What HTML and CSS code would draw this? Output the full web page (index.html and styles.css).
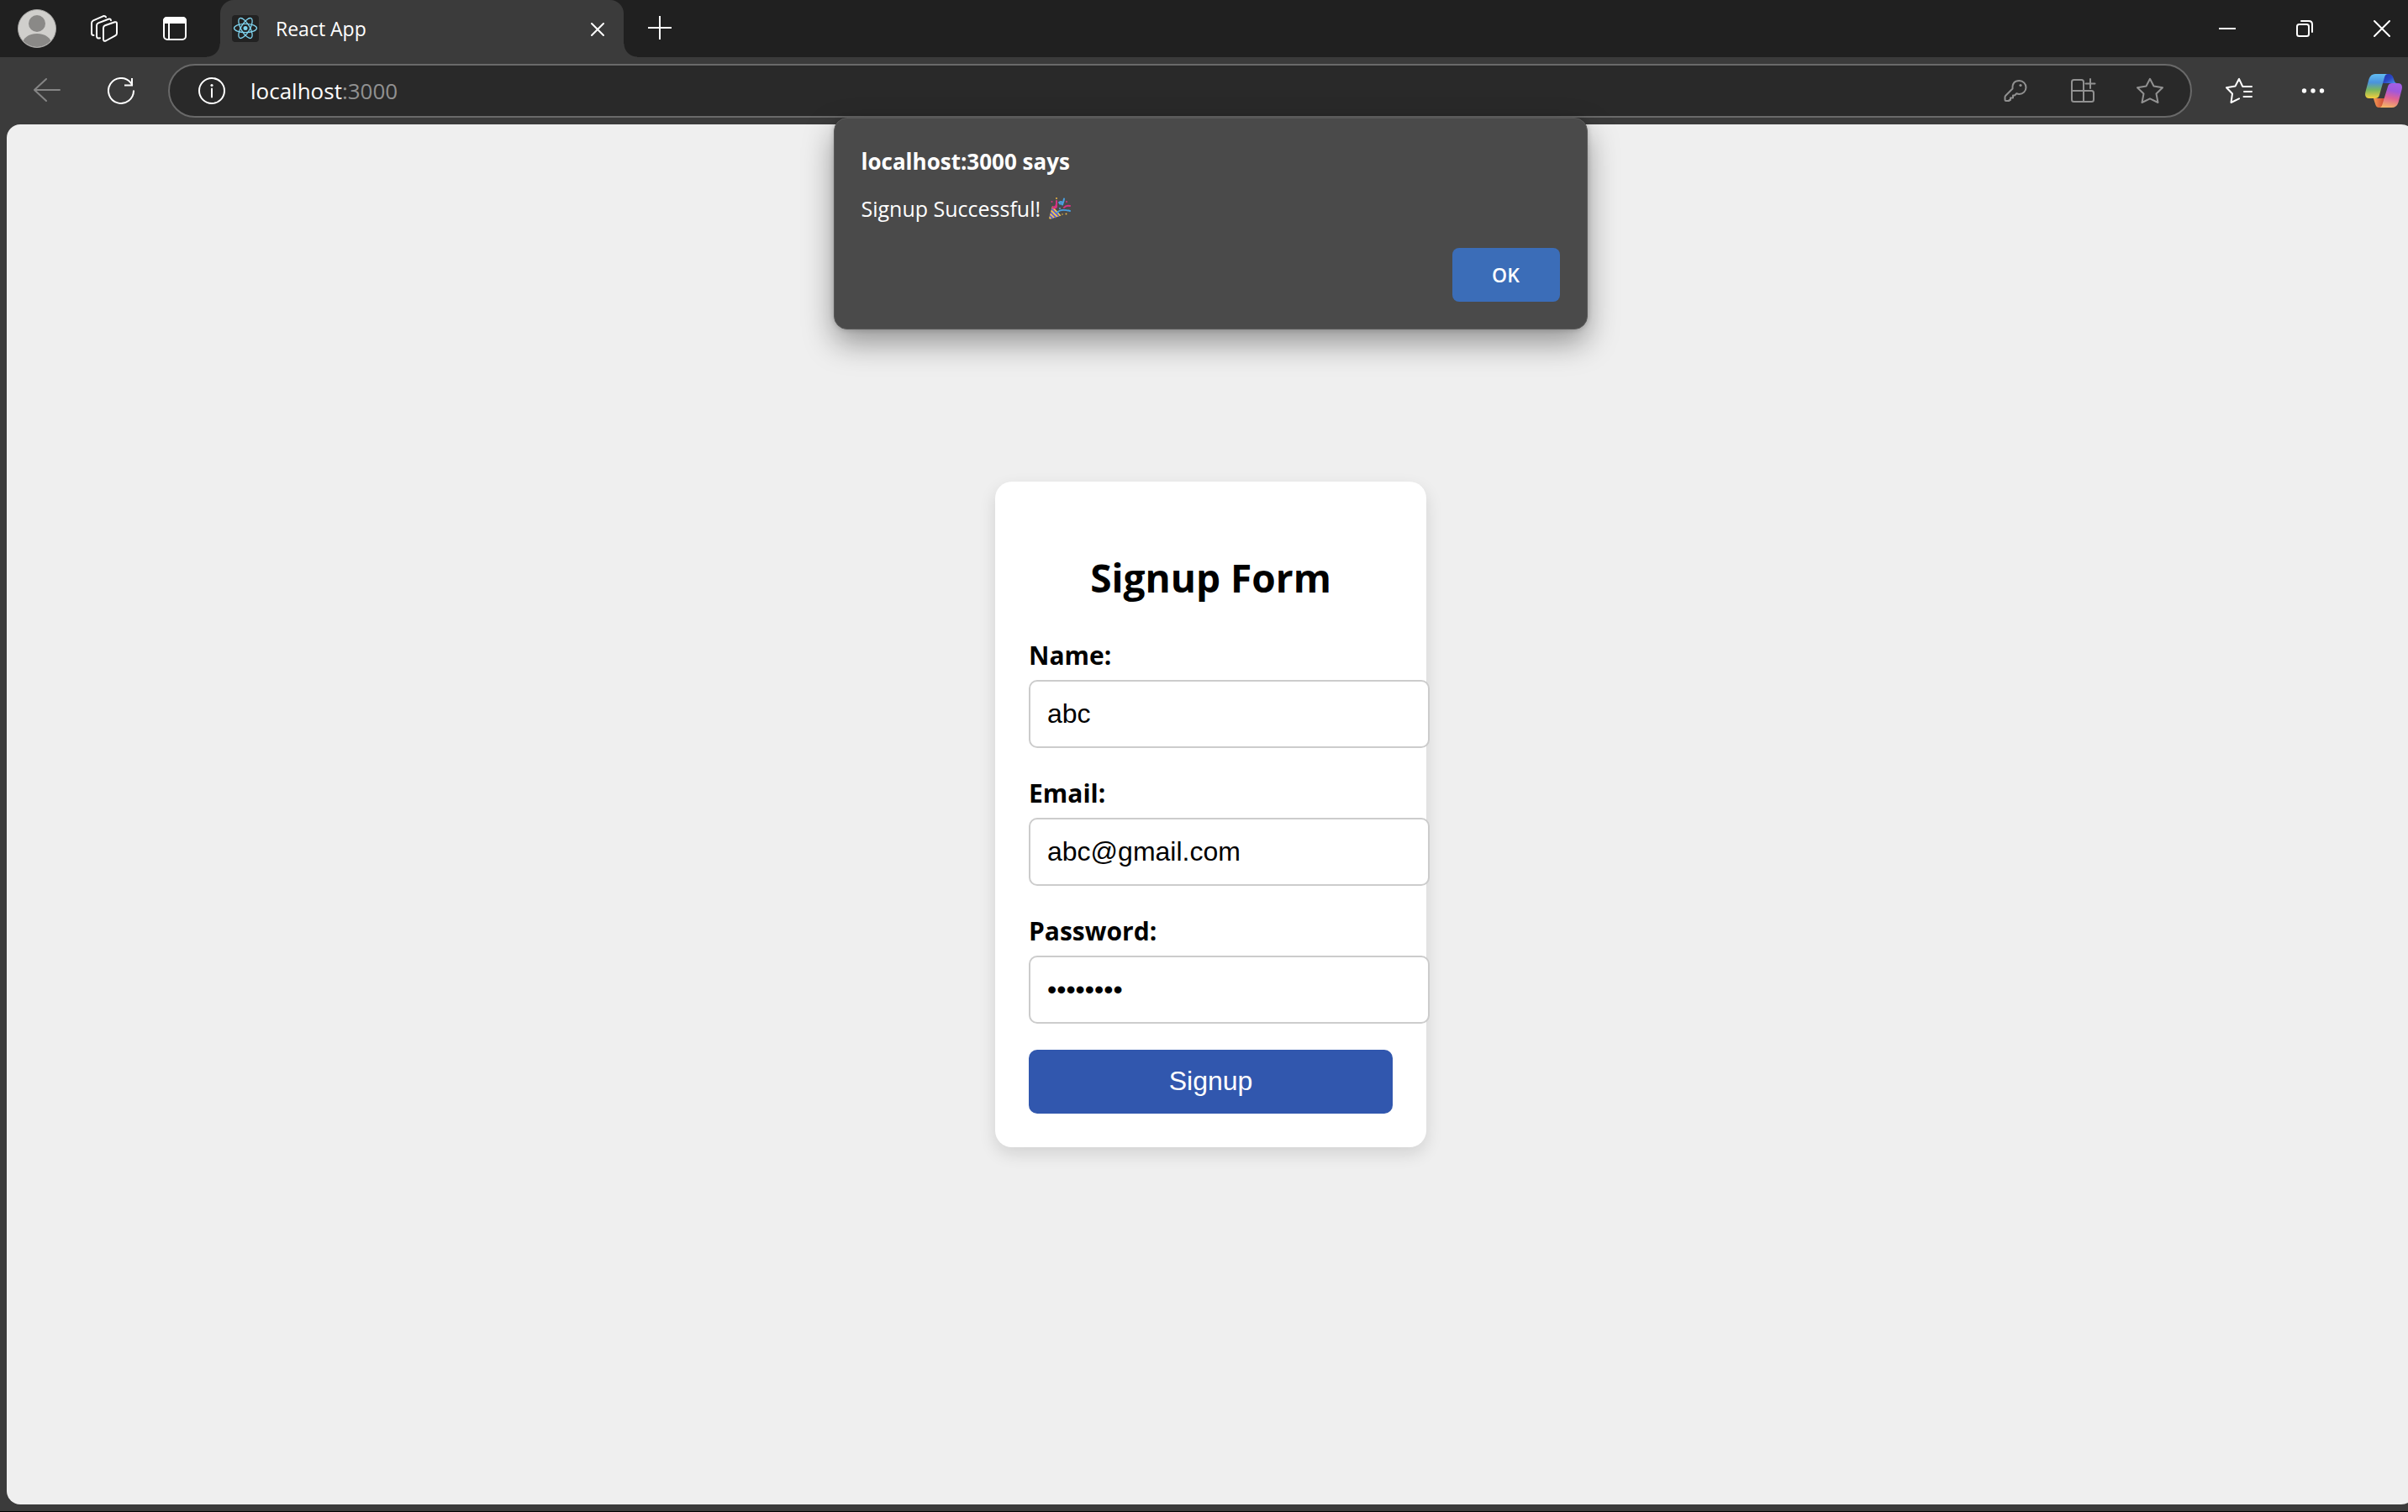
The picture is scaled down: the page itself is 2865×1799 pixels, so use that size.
FILE: index.html
```html
<!DOCTYPE html>
<html lang="en">
<head>
<meta charset="utf-8">
<title>React App</title>
<link rel="stylesheet" href="styles.css">
</head>
<body class="browser">
<header class="tab-strip">
  <button class="icon-button" type="button" aria-label="Profile">
    <svg width="48" height="48" viewBox="0 0 48 48"><defs><clipPath id="avatar-clip"><circle cx="24" cy="24" r="22"/></clipPath></defs><circle cx="24" cy="24" r="22.5" fill="#d0cfcc"/><g clip-path="url(#avatar-clip)" fill="#8a8987"><circle cx="24" cy="18" r="10"/><path d="M6 44c1-9 8-14 18-14s17 5 18 14v4H6z"/></g><circle cx="24" cy="24" r="22.5" fill="none" stroke="#a9a8a6"/></svg>
  </button>
  <button class="icon-button workspaces" type="button" aria-label="Workspaces">
    <svg width="32" height="32" viewBox="0 0 32 32" fill="none" stroke="#fff" stroke-width="2" stroke-linecap="round" stroke-linejoin="round"><path d="M17 12.300 28.500 8.300Q31 7.600 31 10V21.500Q31 23.500 29.200 24.300L18 30.500Q15 31.800 15 28.500V15.200Q15 13 17 12.300z"/><path d="M11 27.200Q7 28.500 7 24.500V12.500Q7 10.200 9 9.400L21 4.700Q23.500 4 24 6.200"/><path d="M3.500 24Q1 24 1 21.500V9.500Q1 7.300 3 6.300L14.500 1.300Q17 .500 18 2.300"/></svg>
  </button>
  <button class="icon-button tab-actions" type="button" aria-label="Tab actions">
    <svg width="32" height="32" viewBox="0 0 32 32"><rect x="3" y="3" width="26" height="26" rx="4" fill="none" stroke="#fff" stroke-width="2"/><path d="M2 10V7q0-5 5-5h18q5 0 5 5v3z" fill="#fff"/><path d="M9 10v19" stroke="#fff" stroke-width="2"/></svg>
  </button>
  <div class="tab">
    <svg class="favicon" width="32" height="32" viewBox="0 0 32 32"><g fill="none" stroke="#7fd3ee" stroke-width="1.300"><ellipse cx="16" cy="15.500" rx="13.500" ry="5.200"/><ellipse cx="16" cy="15.500" rx="13.500" ry="5.200" transform="rotate(60 16 15.500)"/><ellipse cx="16" cy="15.500" rx="13.500" ry="5.200" transform="rotate(120 16 15.500)"/></g><circle cx="16" cy="15.500" r="2.500" fill="#7fd3ee"/></svg>
    <span class="tab-title">React App</span>
    <button class="icon-button" type="button" aria-label="Close tab">
      <svg width="24" height="24" viewBox="0 0 24 24" stroke="#fff" stroke-width="2" stroke-linecap="round"><path d="M5 6l14 14M19 6 5 20"/></svg>
    </button>
  </div>
  <button class="icon-button new-tab" type="button" aria-label="New tab">
    <svg width="32" height="32" viewBox="0 0 32 32" stroke="#fff" stroke-width="2"><path d="M2 15h28M16 1v28"/></svg>
  </button>
  <div class="window-controls">
    <button class="icon-button" type="button" aria-label="Minimize">
      <svg width="32" height="32" viewBox="0 0 32 32"><path d="M6 16h20" stroke="#fff" stroke-width="2"/></svg>
    </button>
    <button class="icon-button" type="button" aria-label="Restore">
      <svg width="32" height="32" viewBox="0 0 32 32" fill="none" stroke="#fff" stroke-width="2" stroke-linecap="round"><rect x="7" y="11" width="14" height="14" rx="2.500"/><path d="M12 7h9q4 0 4 4v9"/></svg>
    </button>
    <button class="icon-button" type="button" aria-label="Close window">
      <svg width="32" height="32" viewBox="0 0 32 32" stroke="#fff" stroke-width="2" stroke-linecap="round"><path d="M7 7l18 18M25 7 7 25"/></svg>
    </button>
  </div>
</header>
<nav class="toolbar" aria-label="Browser toolbar">
  <button class="icon-button back" type="button" aria-label="Back">
    <svg width="32" height="32" viewBox="0 0 32 32" fill="none" stroke="#858585" stroke-width="2" stroke-linecap="round"><path d="M31 15H1M15 2 1 15l14 13"/></svg>
  </button>
  <button class="icon-button" type="button" aria-label="Refresh">
    <svg width="32" height="32" viewBox="0 0 32 32" fill="none" stroke="#fff" stroke-width="2"><path d="M31 15.500A15 15 0 1 1 27.500 6.300L29.500 9M29 1v8.500H20"/></svg>
  </button>
  <div class="address-bar">
    <button class="icon-button" type="button" aria-label="Site information">
      <svg width="32" height="32" viewBox="0 0 32 32" fill="none" stroke="#fff" stroke-width="2"><circle cx="16" cy="16" r="15"/><path d="M16 13.500v10" stroke-linecap="round"/><circle cx="16" cy="9.500" r="1.600" fill="#fff" stroke="none"/></svg>
    </button>
    <span class="url">localhost<span class="port">:3000</span></span>
    <div class="page-actions">
      <button class="icon-button" type="button" aria-label="Passwords">
        <svg width="32" height="32" viewBox="0 0 32 32" fill="none" stroke="#919191" stroke-width="2" stroke-linejoin="round"><path d="M20.500 4a8 8 0 0 1 0 16q-1.700 0-3.200-.800L15 21.500h-2v3h-3V27H8.500v1H5q-1.500 0-1.500-1.500V23.500q0-1 .8-1.800L12.500 13.500Q12 4 20.500 4z"/><circle cx="22" cy="9.500" r="1.600" fill="#919191" stroke="none"/></svg>
      </button>
      <button class="icon-button" type="button" aria-label="Install app">
        <svg width="32" height="32" viewBox="0 0 32 32" fill="none" stroke="#919191" stroke-width="2"><path d="M17 16V5.500Q17 3 14.500 3h-9Q3 3 3 5.500v21Q3 29 5.500 29h21q2.500 0 2.500-2.500v-8Q29 16 26.500 16H3M17 16v13"/><path d="M25 2v11M19.500 7.500h11" stroke-linecap="round"/></svg>
      </button>
      <button class="icon-button" type="button" aria-label="Add to favorites">
        <svg width="32" height="32" viewBox="0 0 32 32" fill="none" stroke="#919191" stroke-width="2" stroke-linejoin="round"><path d="M16 1.800 20.500 10.500 31 12.300 23.500 19.500 25.500 30 16 25.300 6.500 30 8.500 19.500 1 12.300 11.500 10.500z"/></svg>
      </button>
    </div>
  </div>
  <div class="toolbar-actions">
    <button class="icon-button" type="button" aria-label="Favorites">
      <svg width="32" height="32" viewBox="0 0 32 32" fill="none" stroke="#fff" stroke-width="2" stroke-linejoin="round" stroke-linecap="round"><path d="M20 10.500 16 1.800 11.500 10.500 1 12.300 8 19.500 6.500 30 16 25.300M20.500 10.900H31M22 17H31M21.500 23H31"/></svg>
    </button>
    <button class="icon-button" type="button" aria-label="Settings and more">
      <svg width="32" height="32" viewBox="0 0 32 32" fill="#fff"><circle cx="5.500" cy="16" r="2.700"/><circle cx="16" cy="16" r="2.700"/><circle cx="26.500" cy="16" r="2.700"/></svg>
    </button>
    <button class="icon-button copilot" type="button" aria-label="Copilot">
      <svg width="44" height="40" viewBox="0 0 44 40">
        <defs>
          <linearGradient id="cp-left" x1="0" y1="0" x2="0" y2="1"><stop offset="0" stop-color="#62bdf2"/><stop offset=".35" stop-color="#4a93dd"/><stop offset=".65" stop-color="#79b65f"/><stop offset="1" stop-color="#f4cf3d"/></linearGradient>
          <linearGradient id="cp-top" x1="0" y1="0" x2="1" y2="1"><stop offset="0" stop-color="#2433a8"/><stop offset=".5" stop-color="#2b47c4"/><stop offset="1" stop-color="#4f9bee"/></linearGradient>
          <linearGradient id="cp-right" x1=".6" y1="0" x2=".4" y2="1"><stop offset="0" stop-color="#a35fe6"/><stop offset=".3" stop-color="#a158dc"/><stop offset=".6" stop-color="#df6295"/><stop offset="1" stop-color="#f2b365"/></linearGradient>
          <linearGradient id="cp-bottom" x1="0" y1="0" x2="1" y2="0"><stop offset="0" stop-color="#f39a55"/><stop offset="1" stop-color="#c9402f"/></linearGradient>
        </defs>
        <path d="M22 0h6q4 0 5.500 4.500L35 9q.7 2 3 2H21z" fill="url(#cp-top)"/>
        <path d="M10 29h14l-3 8q-1 3-4.500 3-3 0-4-3L10.500 31z" fill="url(#cp-bottom)"/>
        <path d="M12 0h15q-3 0-4 4l-6 21q-1 4-5 4H5q-6.500 0-4.500-8L4.500 6Q6.500 0 12 0z" fill="url(#cp-left)"/>
        <path d="M32 11h7q6.500 0 4.500 8l-4 15q-2 6-8 6H16.500q3 0 4-4L27 15q1-4 5-4z" fill="url(#cp-right)"/>
      </svg>
    </button>
  </div>
</nav>
<main class="viewport">
  <div class="dialog" role="alertdialog" aria-labelledby="dialog-title" aria-describedby="dialog-message">
    <h1 class="dialog-title" id="dialog-title">localhost:3000 says</h1>
    <p class="dialog-message" id="dialog-message">Signup Successful!
      <svg class="party" width="26" height="26" viewBox="0 0 26 26" role="img" aria-label="Party popper"><path d="M4 10 14.500 21.500 2 25.500Q0 26 .300 24z" fill="#f6c84c"/><path d="M3.300 13.500 12 22.300M2 17.500l6.500 6.500M1 21.500l3.500 3.500" stroke="#5b5fd0" stroke-width="1.800"/><path d="M4.500 11.500Q10 12 9 4M5 12.500q5 .5 4-3" fill="none" stroke="#d63384" stroke-width="2" stroke-linecap="round"/><path d="M18 1.500q-.5 3.500-2 7M12 6q3-2 4 0t-3 1.500M10 18q3-5 15-2" fill="none" stroke="#4a9fe0" stroke-width="2" stroke-linecap="round"/><path d="M18 12q2-3 7-2" fill="none" stroke="#d63384" stroke-width="2" stroke-linecap="round"/><g fill="#f0b840"><circle cx="9" cy="1" r="1"/><circle cx="20.500" cy="19.500" r="1"/><circle cx="16" cy="20" r=".8"/></g><g fill="#d63384"><circle cx="3.500" cy="5" r="1"/><circle cx="21" cy="5" r="1"/></g><circle cx="13" cy="13" r="1" fill="#4a9fe0"/></svg>
    </p>
    <button class="dialog-ok" type="button">OK</button>
  </div>
  <form class="signup-card">
    <h2 class="signup-title">Signup Form</h2>
    <label class="field-label" for="name">Name:</label>
    <input class="field-input" id="name" type="text" value="abc">
    <label class="field-label" for="email">Email:</label>
    <input class="field-input" id="email" type="email" value="abc@gmail.com">
    <label class="field-label" for="password">Password:</label>
    <input class="field-input" id="password" type="password" value="abcd1234">
    <button class="signup-button" type="button">Signup</button>
  </form>
</main>
</body>
</html>
```
FILE: styles.css
```css
*,
*::before,
*::after {
  box-sizing: border-box;
}

.browser {
  display: flex;
  flex-direction: column;
  min-height: 100vh;
  margin: 0;
  overflow-x: hidden;
  border-bottom: 1px solid #000;
  background: #3b3b3b;
  font-family: "Open Sans", "Noto Sans", sans-serif;
}

svg {
  display: block;
  flex: none;
}

.icon-button {
  flex: none;
  padding: 0;
  border: 0;
  background: none;
}

/* Tab strip */
.tab-strip {
  display: flex;
  align-items: center;
  height: 68px;
  padding: 0 15px 0 20px;
  background: #202020;
}

.workspaces {
  margin-left: 40px;
}

.tab-actions {
  margin-left: 52px;
}

.tab {
  position: relative;
  display: flex;
  align-items: center;
  width: 480px;
  height: 68px;
  margin-left: 38px;
  padding: 0 19px 0 14px;
  border-radius: 16px 16px 0 0;
  background: #3b3b3b;
}

.tab::before,
.tab::after {
  content: "";
  position: absolute;
  bottom: 0;
  width: 16px;
  height: 16px;
}

.tab::before {
  right: 100%;
  background: radial-gradient(circle at 0 0, #202020 15px, #3b3b3b 16px);
}

.tab::after {
  left: 100%;
  background: radial-gradient(circle at 100% 0, #202020 15px, #3b3b3b 16px);
}

.favicon {
  border-radius: 4px;
  background: #222;
}

.tab-title {
  flex: 1;
  margin-left: 20px;
  color: #fff;
  font-size: 23px;
  line-height: 32px;
}

.new-tab {
  margin-left: 27px;
}

.window-controls {
  display: flex;
  gap: 60px;
  margin-left: auto;
}

/* Toolbar */
.toolbar {
  display: flex;
  align-items: center;
  height: 80px;
  padding: 0 7px 0 40px;
}

.back {
  margin-right: 56px;
}

.address-bar {
  display: flex;
  flex: 1;
  align-items: center;
  height: 64px;
  margin: 0 40px;
  padding: 0 32px 0 34px;
  border: 2px solid #696969;
  border-radius: 32px;
  background: #292929;
}

.url {
  margin-left: 30px;
  color: #fff;
  font-size: 26px;
  line-height: 36px;
}

.port {
  color: #919191;
}

.page-actions {
  display: flex;
  gap: 48px;
  margin-left: auto;
}

.toolbar-actions {
  display: flex;
  align-items: center;
  gap: 56px;
}

.copilot {
  margin-left: -10px;
}

/* Web page */
.viewport {
  position: relative;
  display: flex;
  flex: 1;
  align-items: center;
  justify-content: center;
  margin: 0 -8px 8px 8px;
  border-radius: 16px;
  background: #efefef;
}

.dialog {
  position: absolute;
  top: -8px;
  left: 50%;
  display: flex;
  flex-direction: column;
  width: 897px;
  margin-left: -449px;
  padding: 32px;
  border: 1px solid #5a5a5a;
  border-radius: 16px;
  background: #4a4a4a;
  box-shadow: 0 16px 36px rgba(0, 0, 0, 0.38), 0 0 6px rgba(0, 0, 0, 0.2);
  color: #fff;
}

.dialog-title {
  margin: 0 0 18px;
  font-size: 26px;
  font-weight: 700;
  line-height: 38px;
}

.dialog-message {
  display: flex;
  align-items: center;
  gap: 10px;
  margin: 0 0 28px;
  font-size: 25px;
  line-height: 38px;
}

.dialog-ok {
  align-self: flex-end;
  width: 128px;
  height: 64px;
  padding: 0;
  border: 0;
  border-radius: 8px;
  background: #3b6db8;
  color: #fff;
  font-family: inherit;
  font-size: 23px;
  font-weight: 600;
}

.signup-card {
  display: flex;
  flex-direction: column;
  width: 513px;
  padding: 40px;
  border-radius: 20px;
  background: #fff;
  box-shadow: 0 8px 20px rgba(0, 0, 0, 0.12);
  color: #000;
}

.signup-title {
  margin: 40px 0 36px;
  font-size: 46px;
  font-weight: 700;
  line-height: 68px;
  text-align: center;
}

.field-label {
  margin-bottom: 6px;
  font-size: 30px;
  font-weight: 700;
  line-height: 46px;
}

.field-input {
  width: 477px;
  height: 81px;
  margin-bottom: 31px;
  padding: 0 20px;
  border: 2px solid #ccc;
  border-radius: 10px;
  background: #fff;
  color: #000;
  font-family: "Liberation Sans", Arial, sans-serif;
  font-size: 32px;
}

.signup-button {
  height: 76px;
  padding: 0 0 2px;
  border: 0;
  border-radius: 10px;
  background: #3157ae;
  color: #fff;
  font-family: "Liberation Sans", Arial, sans-serif;
  font-size: 32px;
}
```
